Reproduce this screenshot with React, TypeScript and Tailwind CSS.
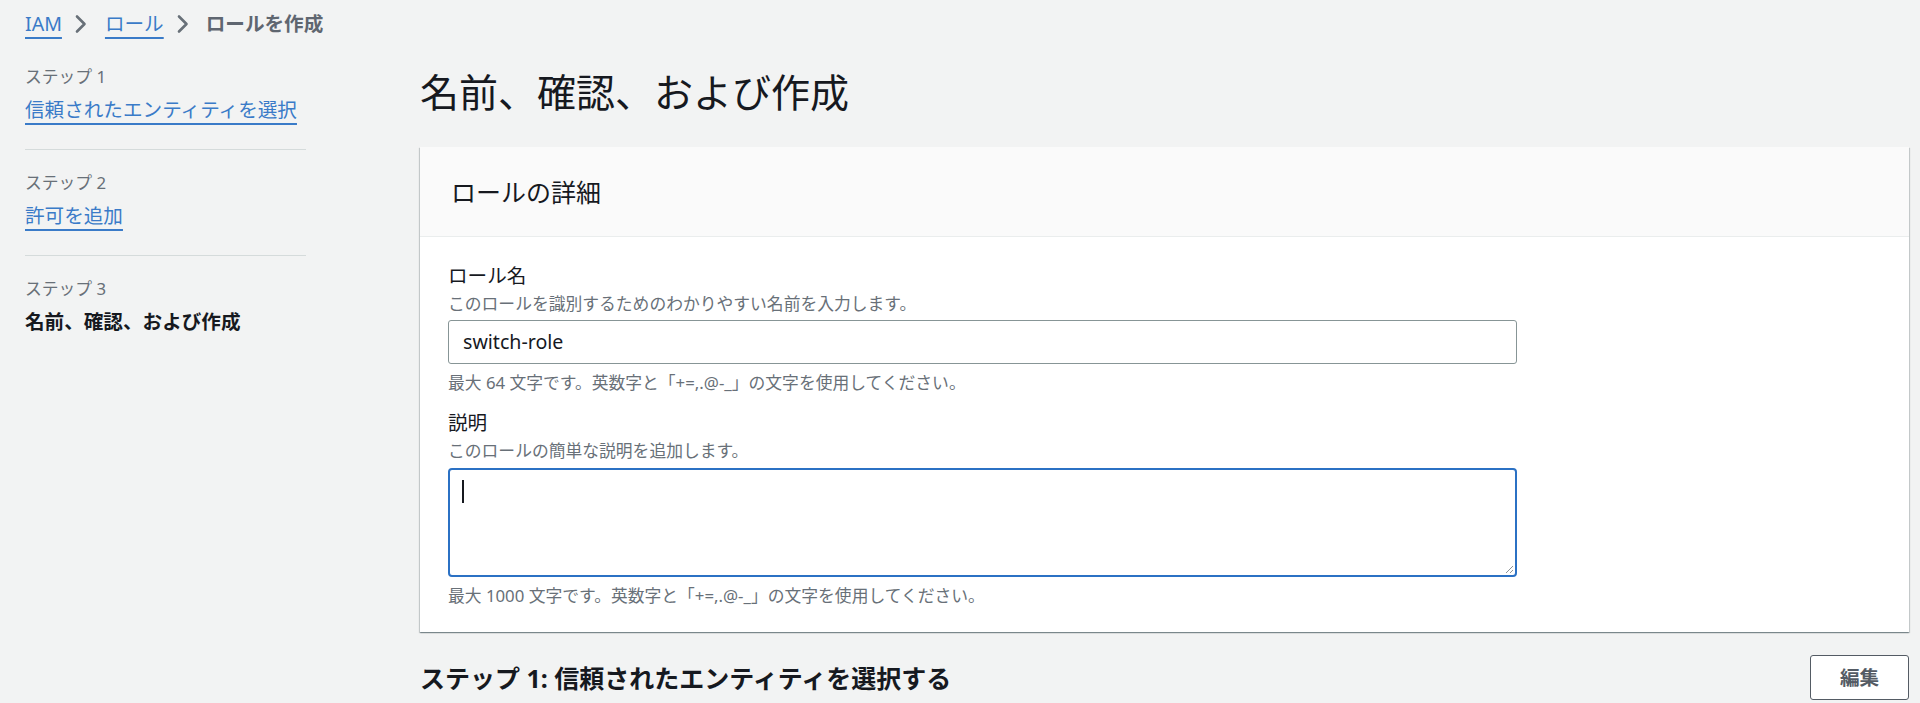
import React from 'react';

const FONT = { fontFamily: '"Noto Sans", "Noto Sans CJK JP", sans-serif' };

const STEPS = [
    { label: 'ステップ 1', title: '信頼されたエンティティを選択', link: true },
    { label: 'ステップ 2', title: '許可を追加', link: true },
    { label: 'ステップ 3', title: '名前、確認、および作成', link: false },
];

function Chevron({ className }: { className?: string }) {
    return (
        <svg viewBox="0 0 20 20" className={className} fill="none" stroke="currentColor" strokeWidth="2.6" strokeLinecap="round" strokeLinejoin="round">
            <path d="M6 2.5 13.5 10 6 17.5" />
        </svg>
    );
}

// パンくずリスト
function Breadcrumbs() {
    return (
        <nav className="flex items-center h-[48px] pl-[25px] text-[19.6px] leading-[26px]">
            <a className="text-[#3a7bc8] underline underline-offset-[6px] decoration-[1.5px]">IAM</a>
            <Chevron className="w-[20px] h-[20px] text-[#687078] ml-[9px] mr-[14px]" />
            <a className="text-[#3a7bc8] underline underline-offset-[6px] decoration-[1.5px]">ロール</a>
            <Chevron className="w-[20px] h-[20px] text-[#687078] ml-[9px] mr-[13px]" />
            <span className="text-[#5f6670] font-bold">ロールを作成</span>
        </nav>
    );
}

// ウィザードのステップ一覧
function StepNav() {
    return (
        <aside className="w-[281px] ml-[25px] shrink-0">
            {STEPS.map((step, i) => (
                <div
                    key={step.label}
                    className={`${i === 0 ? 'pt-[17px]' : 'pt-[21px] border-t border-[#d5dbdb]'} ${i < STEPS.length - 1 ? 'pb-[25px]' : ''}`}
                >
                    <div className="text-[16.8px] leading-[24px] text-[#687078]">{step.label}</div>
                    {step.link ? (
                        <a className="block mt-[7px] text-[19.6px] leading-[28px] text-[#3a7bc8] underline underline-offset-[6px] decoration-[1.5px]">
                            {step.title}
                        </a>
                    ) : (
                        <div className="mt-[7px] text-[19.6px] leading-[28px] font-bold text-[#16191f]">{step.title}</div>
                    )}
                </div>
            ))}
        </aside>
    );
}

function FieldLabel({ title, desc }: { title: string; desc: string }) {
    return (
        <>
            <div className="text-[19.6px] leading-[26px] text-[#16191f]">{title}</div>
            <div className="mt-[4px] text-[16.8px] leading-[22px] text-[#687078]">{desc}</div>
        </>
    );
}

function Constraint({ children }: { children: React.ReactNode }) {
    return <div className="mt-[8px] text-[16.8px] leading-[22px] text-[#687078]">{children}</div>;
}

// ロールの詳細カード
function RoleDetails() {
    return (
        <section className="bg-white shadow-[0_1px_1px_0_rgba(0,28,36,0.3),1px_1px_1px_0_rgba(0,28,36,0.15),-1px_1px_1px_0_rgba(0,28,36,0.15)]">
            <header className="h-[90px] flex items-center px-[31px] bg-[#fafafa] border-b border-[#eaeded]">
                <h2 className="text-[25px] leading-[32px] text-[#16191f]">ロールの詳細</h2>
            </header>

            <div className="pl-[28px] pt-[26px] pb-[25px]">
                <div className="w-[1069px]">
                    <FieldLabel title="ロール名" desc="このロールを識別するためのわかりやすい名前を入力します。" />
                    <div className="mt-[5px] h-[44px] flex items-center px-[14px] border border-[#879596] rounded-[3px] bg-white text-[19.6px] text-[#16191f]">
                        switch-role
                    </div>
                    <Constraint>最大 64 文字です。英数字と「+=,.@-_」の文字を使用してください。</Constraint>

                    <div className="mt-[16px]">
                        <FieldLabel title="説明" desc="このロールの簡単な説明を追加します。" />
                    </div>
                    <div className="relative mt-[6px] h-[109px] px-[12px] pt-[10px] border-2 border-[#2b71c4] rounded-[4px] bg-white">
                        <span className="block w-[1.5px] h-[23px] bg-[#16191f]" />
                        {/* リサイズハンドル */}
                        <svg viewBox="0 0 10 10" className="absolute right-[1px] bottom-[1px] w-[10px] h-[10px] text-[#8d9396]" stroke="currentColor" strokeWidth="1">
                            <path d="M9 2 2 9M9 6 6 9" />
                        </svg>
                    </div>
                    <Constraint>最大 1000 文字です。英数字と「+=,.@-_」の文字を使用してください。</Constraint>
                </div>
            </div>
        </section>
    );
}

export default function App() {
    return (
        <div className="min-h-screen bg-[#f2f3f3] text-[#16191f]" style={FONT}>
            <Breadcrumbs />
            <div className="flex">
                <StepNav />
                <main className="flex-1 ml-[114px] mr-[11px] pt-[20px]">
                    <h1 className="text-[39px] leading-[48px] text-[#16191f]">名前、確認、および作成</h1>
                    <div className="mt-[31px]">
                        <RoleDetails />
                    </div>
                    <div className="mt-[23px] flex items-center justify-between">
                        <h2 className="text-[25px] leading-[32px] font-bold text-[#16191f]">
                            ステップ 1: 信頼されたエンティティを選択する
                        </h2>
                        <button className="w-[99px] h-[45px] border border-[#545b64] rounded-[3px] bg-white text-[19.6px] font-bold text-[#545b64]">
                            編集
                        </button>
                    </div>
                </main>
            </div>
        </div>
    );
}
